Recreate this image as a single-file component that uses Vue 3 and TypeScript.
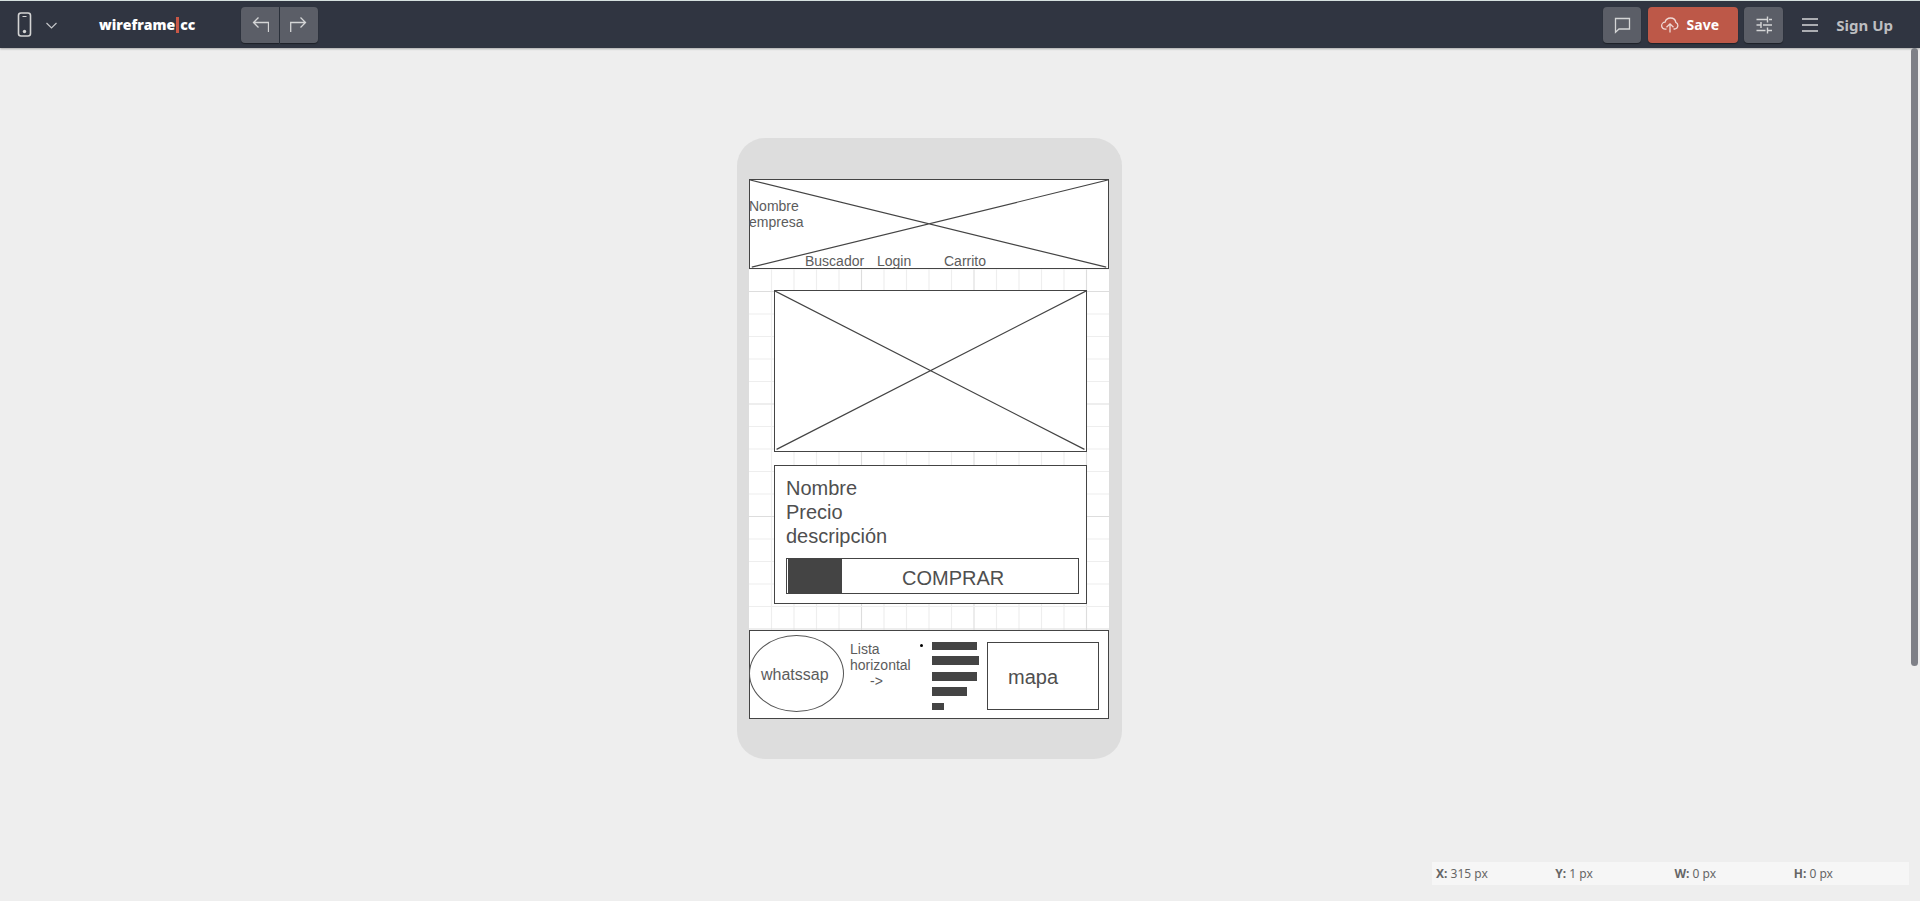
<script setup lang="ts">
import { ref } from 'vue'

interface Box {
  id: string
  kind: 'rect' | 'image' | 'ellipse' | 'solid' | 'dot'
  x: number
  y: number
  w: number
  h: number
}

interface Label {
  text: string
  size: 'small' | 'medium' | 'large'
  x: number
  y: number
}

const boxes: Box[] = [
  { id: 'header', kind: 'image', x: 0, y: 0, w: 360, h: 90 },
  { id: 'hero', kind: 'image', x: 25, y: 111, w: 313, h: 162 },
  { id: 'card', kind: 'rect', x: 25, y: 286, w: 313, h: 139 },
  { id: 'buy', kind: 'rect', x: 37, y: 379, w: 293, h: 36 },
  { id: 'buy-icon', kind: 'solid', x: 39, y: 379, w: 54, h: 36 },
  { id: 'footer', kind: 'rect', x: 0, y: 451, w: 360, h: 89 },
  { id: 'contact', kind: 'ellipse', x: 0, y: 456, w: 95, h: 77 },
  { id: 'bullet', kind: 'dot', x: 171, y: 465, w: 3, h: 3 },
  { id: 'line-1', kind: 'solid', x: 183, y: 463, w: 45, h: 8 },
  { id: 'line-2', kind: 'solid', x: 183, y: 477, w: 47, h: 9 },
  { id: 'line-3', kind: 'solid', x: 183, y: 493, w: 45, h: 9 },
  { id: 'line-4', kind: 'solid', x: 183, y: 508, w: 35, h: 9 },
  { id: 'line-5', kind: 'solid', x: 183, y: 524, w: 12, h: 7 },
  { id: 'map', kind: 'rect', x: 238, y: 463, w: 112, h: 68 },
]

const labels: Label[] = [
  { text: 'Nombre\nempresa', size: 'small', x: 0, y: 19 },
  { text: 'Buscador', size: 'small', x: 56, y: 74 },
  { text: 'Login', size: 'small', x: 128, y: 74 },
  { text: 'Carrito', size: 'small', x: 195, y: 74 },
  { text: 'Nombre\nPrecio\ndescripción', size: 'large', x: 37, y: 297 },
  { text: 'COMPRAR', size: 'large', x: 153, y: 387 },
  { text: 'whatssap', size: 'medium', x: 12, y: 487 },
  { text: 'Lista\nhorizontal', size: 'small', x: 101, y: 462 },
  { text: '->', size: 'small', x: 121, y: 494 },
  { text: 'mapa', size: 'large', x: 259, y: 486 },
]

const readout = ref([
  { name: 'X', value: 315 },
  { name: 'Y', value: 1 },
  { name: 'W', value: 0 },
  { name: 'H', value: 0 },
])

const steps = (count: number) => Array.from({ length: count }, (_, i) => i + 1)
const place = (b: Box) => ({
  left: b.x + 'px',
  top: b.y + 'px',
  width: b.w + 'px',
  height: b.h + 'px',
})
</script>

<template>
  <div class="app">
    <header class="bar">
      <button class="plain device" aria-label="Device">
        <svg width="42" height="26" viewBox="0 0 42 26" fill="none">
          <rect x="1.500" y="1" width="12" height="23" rx="2.5" stroke="#d4d4d4" stroke-width="1.6" />
          <path d="M5.500 4.500h4" stroke="#d4d4d4" />
          <circle cx="7.500" cy="19.500" r="1.7" fill="#d4d4d4" />
          <path d="M29.500 11l5 5 5-5" stroke="#c4c6c9" stroke-width="1.2" />
        </svg>
      </button>
      <a class="logo" href="#">wireframe<span class="pipe"></span>cc</a>
      <div class="history">
        <button class="tool" aria-label="Undo">
          <svg width="18" height="18" viewBox="0 0 18 18" fill="none" stroke="#d4d5d6" stroke-width="1.3">
            <path d="M7.500 1.500l-5 5 5 5M2.500 6.500h15V16" />
          </svg>
        </button>
        <button class="tool" aria-label="Redo">
          <svg width="18" height="18" viewBox="0 0 18 18" fill="none" stroke="#d4d5d6" stroke-width="1.3">
            <path d="M10.500 1.500l5 5-5 5M15.500 6.500H.7V16" />
          </svg>
        </button>
      </div>
      <nav class="actions">
        <button class="tool comment" aria-label="Comments">
          <svg width="18" height="18" viewBox="0 0 18 18" fill="none" stroke="#d4d5d6" stroke-width="1.3">
            <path d="M2.500 2.500h14v10.500H6l-3.500 3.200z" />
          </svg>
        </button>
        <button class="tool save">
          <svg width="18" height="18" viewBox="0 0 18 18" fill="none" stroke="#f0d9d5" stroke-width="1.3">
            <path d="M5.500 13.200H4.300a3.500 3.500 0 0 1-.3-7C4.800 3.500 7 2 9.500 2c3.200 0 5 2 5.300 4.400 2.800 1.200 2.900 5.500-.8 6.600h-1.500M9 16.500V8M5.500 11.300L9 7.800l3.500 3.500" />
          </svg>
          Save
        </button>
        <button class="tool settings" aria-label="Settings">
          <svg width="18" height="18" viewBox="0 0 18 18" fill="none" stroke="#d4d5d6" stroke-width="1.4">
            <path d="M1.500 3.500h11M12.500 .5v6M14 3.500h3M1.500 9h4M6 6v6M8 9h9M1.500 14.500h9M12.500 11.500v6M12.500 14.500h4.500" />
          </svg>
        </button>
        <button class="plain menu" aria-label="Menu">
          <svg width="16" height="16" viewBox="0 0 16 16" stroke="#d4d5d6" stroke-width="1.6">
            <path d="M0 2h16M0 8h16M0 14h16" />
          </svg>
        </button>
        <a class="signup" href="#">Sign Up</a>
      </nav>
    </header>

    <main class="stage">
      <div class="phone">
        <div class="screen">
          <svg class="grid" viewBox="0 0 320 480" preserveAspectRatio="none">
            <line v-for="n in steps(15)" :key="'v' + n" :x1="n * 20" :x2="n * 20" y1="0" y2="480" :class="{ major: n % 5 === 0 }" />
            <line v-for="n in steps(23)" :key="'h' + n" x1="0" x2="320" :y1="n * 20" :y2="n * 20" :class="{ major: n % 5 === 0 }" />
          </svg>
          <div v-for="b in boxes" :key="b.id" class="box" :class="b.kind" :style="place(b)">
            <svg v-if="b.kind === 'image'" class="cross" viewBox="0 0 100 100" preserveAspectRatio="none">
              <path d="M0 0L99.500 99M100 0L.5 99" />
            </svg>
          </div>
          <span v-for="l in labels" :key="l.text" class="label" :class="l.size" :style="{ left: l.x + 'px', top: l.y + 'px' }">{{ l.text }}</span>
        </div>
      </div>
    </main>

    <div class="thumb"></div>
    <footer class="status">
      <span v-for="r in readout" :key="r.name"><b>{{ r.name }}:</b> {{ r.value }} px</span>
    </footer>
  </div>
</template>

<style>
body {
  margin: 0;
  background: #eee;
}
</style>

<style scoped>
.app {
  min-height: 100vh;
  display: flex;
  flex-direction: column;
  background: #eee;
  font-family: "Noto Sans", "Open Sans", sans-serif;
}
.bar {
  box-sizing: border-box;
  height: 48px;
  padding: 0 27px 0 17px;
  display: flex;
  align-items: center;
  background: #303541;
  border-top: 1px solid #d6e1df;
  box-shadow: 0 1px 2px rgba(0, 0, 0, 0.3);
}
button {
  font: inherit;
  border: 0;
  padding: 0;
  cursor: pointer;
}
svg {
  display: block;
}
.plain {
  background: none;
}
.device {
  width: 42px;
}
.logo {
  display: flex;
  align-items: center;
  width: 142px;
  margin-left: 40px;
  color: #fff;
  font-family: "Open Sans", "Noto Sans", sans-serif;
  font-size: 14px;
  font-weight: 800;
  line-height: 20px;
  text-decoration: none;
}
.pipe {
  width: 3px;
  height: 16px;
  margin: 0 1px;
  background: #c95746;
}
.history {
  display: flex;
  gap: 1px;
}
.tool {
  width: 38px;
  height: 36px;
  display: flex;
  align-items: center;
  justify-content: center;
  border-radius: 4px;
  background: #5b5e67;
  box-shadow: 0 1px 1px #1d2027;
}
.history .tool:first-child {
  border-radius: 4px 0 0 4px;
}
.history .tool:last-child {
  border-radius: 0 4px 4px 0;
}
.actions {
  display: flex;
  align-items: center;
  margin-left: auto;
}
.save {
  width: 90px;
  gap: 8px;
  padding-right: 7px;
  box-sizing: border-box;
  margin: 0 6px 0 7px;
  background: #bd5848;
  color: #fff;
  font-size: 14px;
  font-weight: 700;
}
.settings {
  width: 39px;
}
.menu {
  margin: 0 18px 0 19px;
}
.signup {
  color: #bdbec0;
  font-size: 15px;
  font-weight: 700;
  line-height: 20px;
  text-decoration: none;
}
.stage {
  flex: 1;
  display: flex;
  justify-content: center;
  align-items: flex-start;
  padding: 90px 61px 90px 0;
}
.phone {
  padding: 41px 13px 40px 12px;
  border-radius: 28px;
  background: #ddd;
}
.screen {
  position: relative;
  width: 360px;
  height: 540px;
  background: #fff;
  font-family: "Liberation Sans", Arial, sans-serif;
}
.grid {
  width: 100%;
  height: 100%;
}
.grid line {
  stroke: #eee;
  stroke-width: 1;
}
.grid line.major {
  stroke: #ddd;
}
.box {
  position: absolute;
  box-sizing: border-box;
}
.rect,
.image {
  background: #fff;
  border: 1px solid #444;
}
.ellipse {
  border: 1px solid #555;
  border-radius: 50%;
}
.solid {
  background: #444;
}
.dot {
  border-radius: 50%;
  background: #000;
}
.cross {
  width: 100%;
  height: 100%;
}
.cross path {
  fill: none;
  stroke: #444;
  stroke-width: 1.2;
  vector-effect: non-scaling-stroke;
}
.label {
  position: absolute;
  white-space: pre;
}
.small {
  color: #5c5c5c;
  font-size: 14px;
  line-height: 16px;
}
.medium {
  color: #5c5c5c;
  font-size: 16px;
  line-height: 18px;
}
.large {
  color: #4f4f4f;
  font-size: 20px;
  line-height: 24px;
}
.thumb {
  position: absolute;
  top: 48px;
  right: 2px;
  width: 7px;
  height: 618px;
  border-radius: 4px;
  background: #7e8087;
}
.status {
  position: fixed;
  right: 11px;
  bottom: 16px;
  width: 477px;
  display: grid;
  grid-template-columns: repeat(4, 1fr);
  background: #f6f6f6;
  color: #666;
  font-size: 12px;
  line-height: 23px;
}
.status span {
  padding-left: 4px;
}
</style>
